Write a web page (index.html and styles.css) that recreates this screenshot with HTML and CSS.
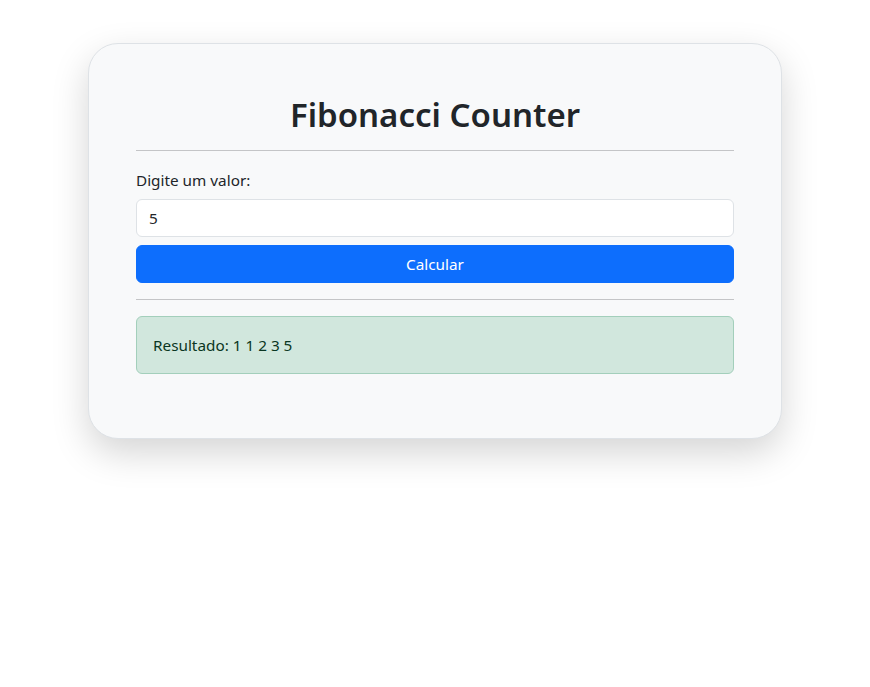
FILE: index.html
```html
<!DOCTYPE html>
<html lang="pt">
<head>
<meta charset="utf-8">
<title>Fibonacci Counter</title>
<link rel="stylesheet" href="styles.css">
</head>
<body>
<div class="page">
  <div class="card">
    <h1 class="title">Fibonacci Counter</h1>
    <hr class="rule">
    <label class="label" for="valor">Digite um valor:</label>
    <input class="input" id="valor" type="text" value="5">
    <button class="btn" type="button">Calcular</button>
    <hr class="rule rule-2">
    <div class="alert">Resultado: 1 1 2 3 5</div>
  </div>
</div>
</body>
</html>
```

FILE: styles.css
```css
* { box-sizing: border-box; }
html, body { margin: 0; padding: 0; background: #fff; }
body {
  min-height: 100vh;
  font-family: "Noto Sans", "Open Sans", sans-serif;
  font-size: 15.3px;
  line-height: 24px;
  color: #212529;
}
.page {
  min-height: 100vh;
  padding-top: 43px;
  padding-left: 88px;
  padding-bottom: 80px;
}
.card {
  width: 694px;
  background: #f8f9fa;
  border: 1px solid #dee2e6;
  border-radius: 30px;
  box-shadow: 0 14px 36px rgba(0,0,0,0.17);
  padding: 50px 47px 64px;
  display: flex;
  flex-direction: column;
}
.title {
  margin: 0 0 14px;
  font-size: 33px;
  font-weight: 600;
  line-height: 42px;
  text-align: center;
}
.rule {
  margin: 0;
  border: 0;
  border-top: 1px solid #c4c5c7;
  height: 0;
}
.label {
  margin-top: 17px;
  margin-bottom: 7px;
}
.input {
  height: 38px;
  border: 1px solid #dee2e6;
  border-radius: 6px;
  background: #fff;
  padding: 6px 12px;
  font: inherit;
  color: #212529;
  outline: none;
}
.btn {
  margin-top: 8px;
  height: 38px;
  border: 1px solid #0d6efd;
  border-radius: 6px;
  background: #0d6efd;
  color: #fff;
  font: inherit;
  padding: 6px 12px;
}
.rule-2 { margin-top: 16px; }
.alert {
  margin-top: 16px;
  background: #d1e7dd;
  border: 1px solid #a3cfbb;
  border-radius: 6px;
  color: #0a3622;
  padding: 16px;
}
```
